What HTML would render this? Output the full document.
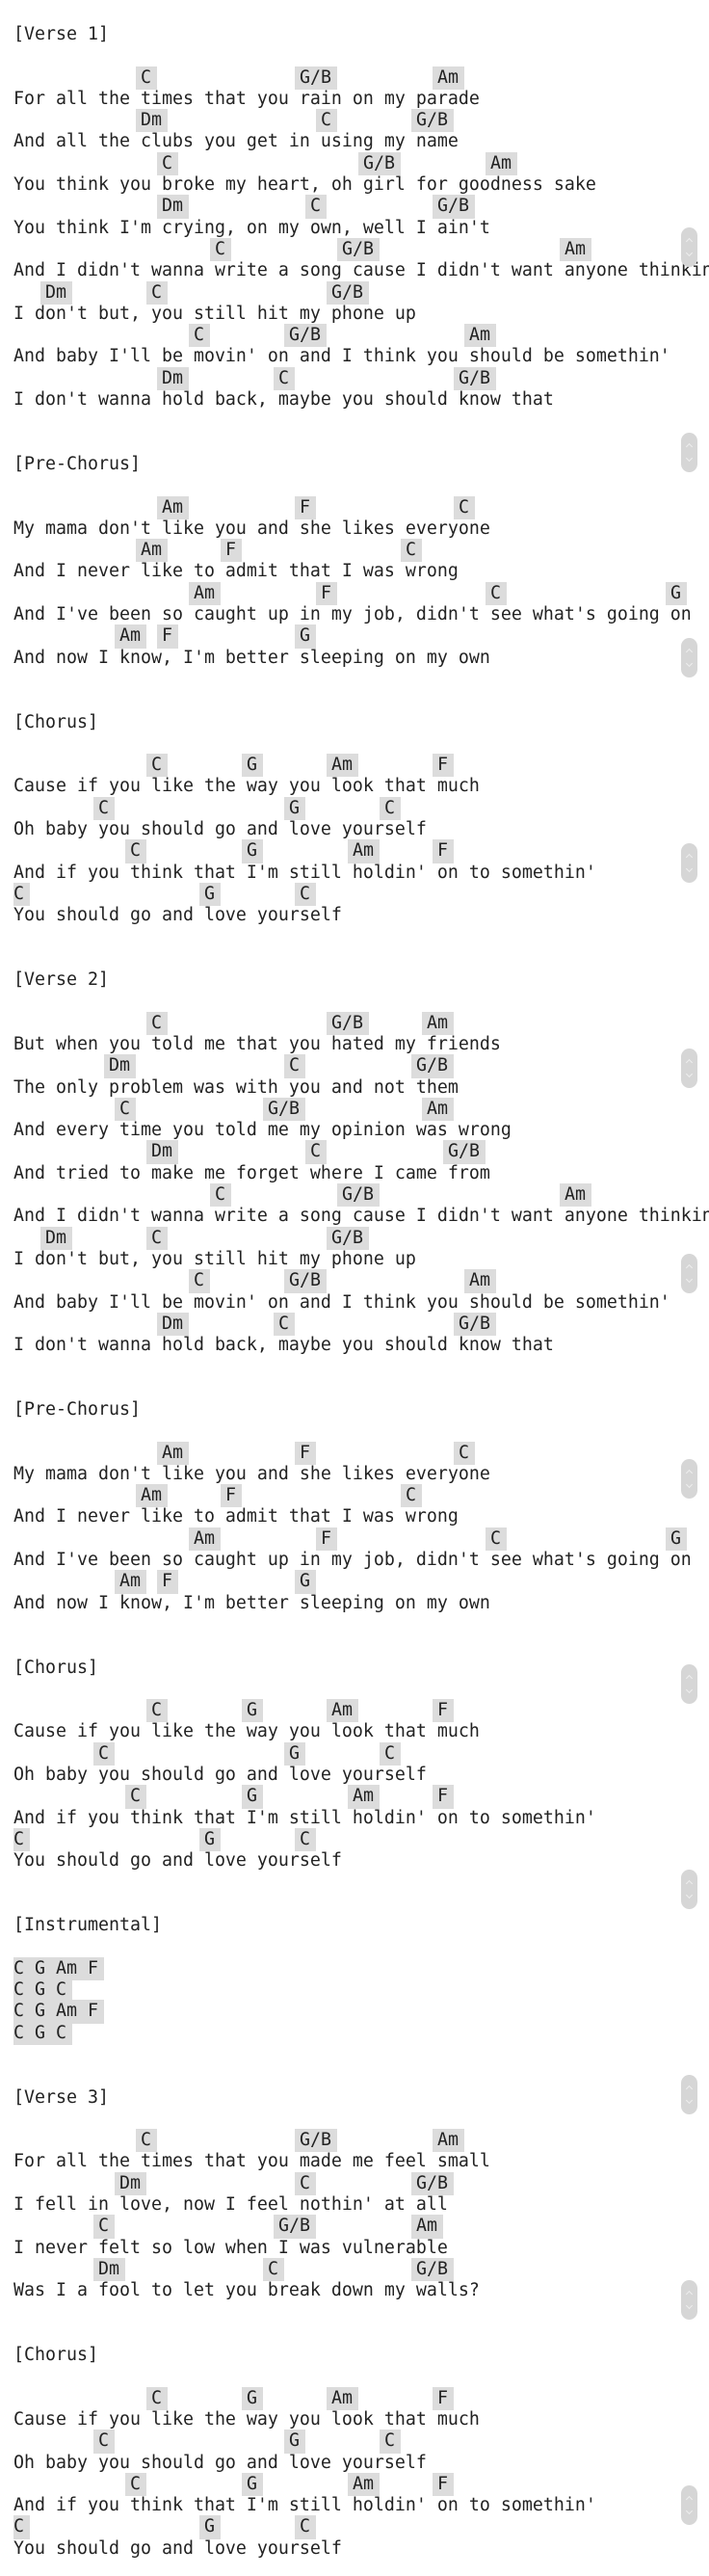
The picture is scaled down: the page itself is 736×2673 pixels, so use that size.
<!DOCTYPE html>
<html><head><meta charset="utf-8">
<style>
html,body{margin:0;padding:0;background:#fff;}
body{width:736px;height:2673px;overflow:hidden;position:relative;}
#s{position:absolute;left:14px;top:25px;width:722px;overflow:hidden;font-family:"DejaVu Sans Mono","Liberation Mono",monospace;font-size:18.27px;color:#222;}
#s div{position:relative;height:22.3px;line-height:22.3px;white-space:pre;}
#s b{position:absolute;top:0;font-weight:normal;background:#dcdcdc;padding:1px 5.5px;margin:-1px 0 0 -5.5px;line-height:22.3px;}
#s div:first-child b{}
.p{position:absolute;left:707px;width:17px;height:41px;border-radius:9px;background:#d6d6d6;}
.p:before,.p:after{content:"";position:absolute;left:6px;width:4px;height:4px;border-left:1px solid #eee;border-top:1px solid #eee;}
.p:before{top:12px;transform:rotate(45deg);}
.p:after{top:24px;transform:rotate(225deg);}
</style></head><body>
<div id="s">
<div>[Verse 1]</div>
<div> </div>
<div><b style="left:132px">C</b><b style="left:297px">G/B</b><b style="left:440px">Am</b></div>
<div>For all the times that you rain on my parade</div>
<div><b style="left:132px">Dm</b><b style="left:319px">C</b><b style="left:418px">G/B</b></div>
<div>And all the clubs you get in using my name</div>
<div><b style="left:154px">C</b><b style="left:363px">G/B</b><b style="left:495px">Am</b></div>
<div>You think you broke my heart, oh girl for goodness sake</div>
<div><b style="left:154px">Dm</b><b style="left:308px">C</b><b style="left:440px">G/B</b></div>
<div>You think I'm crying, on my own, well I ain't</div>
<div><b style="left:209px">C</b><b style="left:341px">G/B</b><b style="left:572px">Am</b></div>
<div>And I didn't wanna write a song cause I didn't want anyone thinking I still care</div>
<div><b style="left:33px">Dm</b><b style="left:143px">C</b><b style="left:330px">G/B</b></div>
<div>I don't but, you still hit my phone up</div>
<div><b style="left:187px">C</b><b style="left:286px">G/B</b><b style="left:473px">Am</b></div>
<div>And baby I'll be movin' on and I think you should be somethin'</div>
<div><b style="left:154px">Dm</b><b style="left:275px">C</b><b style="left:462px">G/B</b></div>
<div>I don't wanna hold back, maybe you should know that</div>
<div> </div>
<div> </div>
<div>[Pre-Chorus]</div>
<div> </div>
<div><b style="left:154px">Am</b><b style="left:297px">F</b><b style="left:462px">C</b></div>
<div>My mama don't like you and she likes everyone</div>
<div><b style="left:132px">Am</b><b style="left:220px">F</b><b style="left:407px">C</b></div>
<div>And I never like to admit that I was wrong</div>
<div><b style="left:187px">Am</b><b style="left:319px">F</b><b style="left:495px">C</b><b style="left:682px">G</b></div>
<div>And I've been so caught up in my job, didn't see what's going on</div>
<div><b style="left:110px">Am</b><b style="left:154px">F</b><b style="left:297px">G</b></div>
<div>And now I know, I'm better sleeping on my own</div>
<div> </div>
<div> </div>
<div>[Chorus]</div>
<div> </div>
<div><b style="left:143px">C</b><b style="left:242px">G</b><b style="left:330px">Am</b><b style="left:440px">F</b></div>
<div>Cause if you like the way you look that much</div>
<div><b style="left:88px">C</b><b style="left:286px">G</b><b style="left:385px">C</b></div>
<div>Oh baby you should go and love yourself</div>
<div><b style="left:121px">C</b><b style="left:242px">G</b><b style="left:352px">Am</b><b style="left:440px">F</b></div>
<div>And if you think that I'm still holdin' on to somethin'</div>
<div><b style="left:0px">C</b><b style="left:198px">G</b><b style="left:297px">C</b></div>
<div>You should go and love yourself</div>
<div> </div>
<div> </div>
<div>[Verse 2]</div>
<div> </div>
<div><b style="left:143px">C</b><b style="left:330px">G/B</b><b style="left:429px">Am</b></div>
<div>But when you told me that you hated my friends</div>
<div><b style="left:99px">Dm</b><b style="left:286px">C</b><b style="left:418px">G/B</b></div>
<div>The only problem was with you and not them</div>
<div><b style="left:110px">C</b><b style="left:264px">G/B</b><b style="left:429px">Am</b></div>
<div>And every time you told me my opinion was wrong</div>
<div><b style="left:143px">Dm</b><b style="left:308px">C</b><b style="left:451px">G/B</b></div>
<div>And tried to make me forget where I came from</div>
<div><b style="left:209px">C</b><b style="left:341px">G/B</b><b style="left:572px">Am</b></div>
<div>And I didn't wanna write a song cause I didn't want anyone thinking I still care</div>
<div><b style="left:33px">Dm</b><b style="left:143px">C</b><b style="left:330px">G/B</b></div>
<div>I don't but, you still hit my phone up</div>
<div><b style="left:187px">C</b><b style="left:286px">G/B</b><b style="left:473px">Am</b></div>
<div>And baby I'll be movin' on and I think you should be somethin'</div>
<div><b style="left:154px">Dm</b><b style="left:275px">C</b><b style="left:462px">G/B</b></div>
<div>I don't wanna hold back, maybe you should know that</div>
<div> </div>
<div> </div>
<div>[Pre-Chorus]</div>
<div> </div>
<div><b style="left:154px">Am</b><b style="left:297px">F</b><b style="left:462px">C</b></div>
<div>My mama don't like you and she likes everyone</div>
<div><b style="left:132px">Am</b><b style="left:220px">F</b><b style="left:407px">C</b></div>
<div>And I never like to admit that I was wrong</div>
<div><b style="left:187px">Am</b><b style="left:319px">F</b><b style="left:495px">C</b><b style="left:682px">G</b></div>
<div>And I've been so caught up in my job, didn't see what's going on</div>
<div><b style="left:110px">Am</b><b style="left:154px">F</b><b style="left:297px">G</b></div>
<div>And now I know, I'm better sleeping on my own</div>
<div> </div>
<div> </div>
<div>[Chorus]</div>
<div> </div>
<div><b style="left:143px">C</b><b style="left:242px">G</b><b style="left:330px">Am</b><b style="left:440px">F</b></div>
<div>Cause if you like the way you look that much</div>
<div><b style="left:88px">C</b><b style="left:286px">G</b><b style="left:385px">C</b></div>
<div>Oh baby you should go and love yourself</div>
<div><b style="left:121px">C</b><b style="left:242px">G</b><b style="left:352px">Am</b><b style="left:440px">F</b></div>
<div>And if you think that I'm still holdin' on to somethin'</div>
<div><b style="left:0px">C</b><b style="left:198px">G</b><b style="left:297px">C</b></div>
<div>You should go and love yourself</div>
<div> </div>
<div> </div>
<div>[Instrumental]</div>
<div> </div>
<div><b style="left:0px">C</b><b style="left:22px">G</b><b style="left:44px">Am</b><b style="left:77px">F</b></div>
<div><b style="left:0px">C</b><b style="left:22px">G</b><b style="left:44px">C</b></div>
<div><b style="left:0px">C</b><b style="left:22px">G</b><b style="left:44px">Am</b><b style="left:77px">F</b></div>
<div><b style="left:0px">C</b><b style="left:22px">G</b><b style="left:44px">C</b></div>
<div> </div>
<div> </div>
<div>[Verse 3]</div>
<div> </div>
<div><b style="left:132px">C</b><b style="left:297px">G/B</b><b style="left:440px">Am</b></div>
<div>For all the times that you made me feel small</div>
<div><b style="left:110px">Dm</b><b style="left:297px">C</b><b style="left:418px">G/B</b></div>
<div>I fell in love, now I feel nothin' at all</div>
<div><b style="left:88px">C</b><b style="left:275px">G/B</b><b style="left:418px">Am</b></div>
<div>I never felt so low when I was vulnerable</div>
<div><b style="left:88px">Dm</b><b style="left:264px">C</b><b style="left:418px">G/B</b></div>
<div>Was I a fool to let you break down my walls?</div>
<div> </div>
<div> </div>
<div>[Chorus]</div>
<div> </div>
<div><b style="left:143px">C</b><b style="left:242px">G</b><b style="left:330px">Am</b><b style="left:440px">F</b></div>
<div>Cause if you like the way you look that much</div>
<div><b style="left:88px">C</b><b style="left:286px">G</b><b style="left:385px">C</b></div>
<div>Oh baby you should go and love yourself</div>
<div><b style="left:121px">C</b><b style="left:242px">G</b><b style="left:352px">Am</b><b style="left:440px">F</b></div>
<div>And if you think that I'm still holdin' on to somethin'</div>
<div><b style="left:0px">C</b><b style="left:198px">G</b><b style="left:297px">C</b></div>
<div>You should go and love yourself</div>
</div>
<div class="p" style="top:236px"></div>
<div class="p" style="top:449px"></div>
<div class="p" style="top:662px"></div>
<div class="p" style="top:875px"></div>
<div class="p" style="top:1088px"></div>
<div class="p" style="top:1301px"></div>
<div class="p" style="top:1514px"></div>
<div class="p" style="top:1727px"></div>
<div class="p" style="top:1940px"></div>
<div class="p" style="top:2153px"></div>
<div class="p" style="top:2366px"></div>
<div class="p" style="top:2579px"></div>
</body></html>
